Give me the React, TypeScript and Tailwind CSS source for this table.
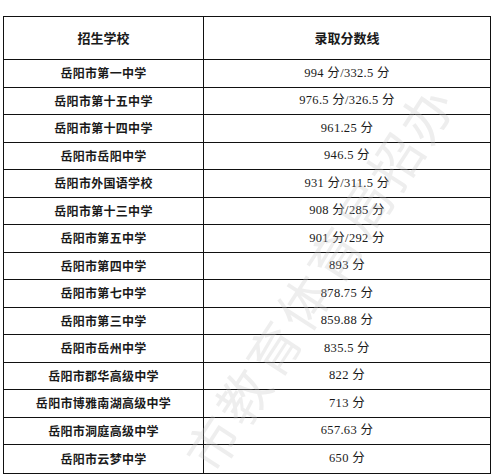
const rows: [string, string][] = [
  ['岳阳市第一中学', '994 分/332.5 分'],
  ['岳阳市第十五中学', '976.5 分/326.5 分'],
  ['岳阳市第十四中学', '961.25 分'],
  ['岳阳市岳阳中学', '946.5 分'],
  ['岳阳市外国语学校', '931 分/311.5 分'],
  ['岳阳市第十三中学', '908 分/285 分'],
  ['岳阳市第五中学', '901 分/292 分'],
  ['岳阳市第四中学', '893 分'],
  ['岳阳市第七中学', '878.75 分'],
  ['岳阳市第三中学', '859.88 分'],
  ['岳阳市岳州中学', '835.5 分'],
  ['岳阳市郡华高级中学', '822 分'],
  ['岳阳市博雅南湖高级中学', '713 分'],
  ['岳阳市洞庭高级中学', '657.63 分'],
  ['岳阳市云梦中学', '650 分'],
];

const App = () => {
  return (
    <div className="relative w-[494px] h-[474px] bg-white overflow-hidden pt-[16px] pl-[3px]">
      <div className="w-[488px] border-[1.5px] border-[#111] font-['Liberation_Serif','Noto_Sans_CJK_SC',serif] text-[#1a1a1a]">
        <div className="flex h-[43px] border-b-[1.5px] border-[#111]">
          <div className="w-[200px] border-r-[1.5px] border-[#111] flex items-center justify-center text-[13px] font-bold font-['Noto_Sans_CJK_SC',sans-serif]">
            招生学校
          </div>
          <div className="flex-1 flex items-center justify-center text-[13px] font-bold font-['Noto_Sans_CJK_SC',sans-serif]">
            录取分数线
          </div>
        </div>
        {rows.map(([school, score], i) => (
          <div
            key={school}
            className={`flex h-[27.5px] ${i < rows.length - 1 ? 'border-b-[1.5px] border-[#111]' : ''}`}
          >
            <div className="w-[200px] border-r-[1.5px] border-[#111] flex items-center justify-center text-[12px] font-semibold tracking-[0.3px] font-['Noto_Sans_CJK_SC',sans-serif]">
              {school}
            </div>
            <div className="flex-1 flex items-center justify-center text-[12.5px] tracking-[0.3px] whitespace-pre">
              {score}
            </div>
          </div>
        ))}
      </div>
      {/* faint diagonal watermark */}
      <div className="pointer-events-none absolute left-[175px] top-[450px] -rotate-[57deg] origin-top-left text-[52px] leading-none text-[#c8c8c8] opacity-30 tracking-[4px] font-['Noto_Sans_CJK_SC',sans-serif] whitespace-nowrap">
        市教育体育局招办
      </div>
    </div>
  );
};

export default App;
